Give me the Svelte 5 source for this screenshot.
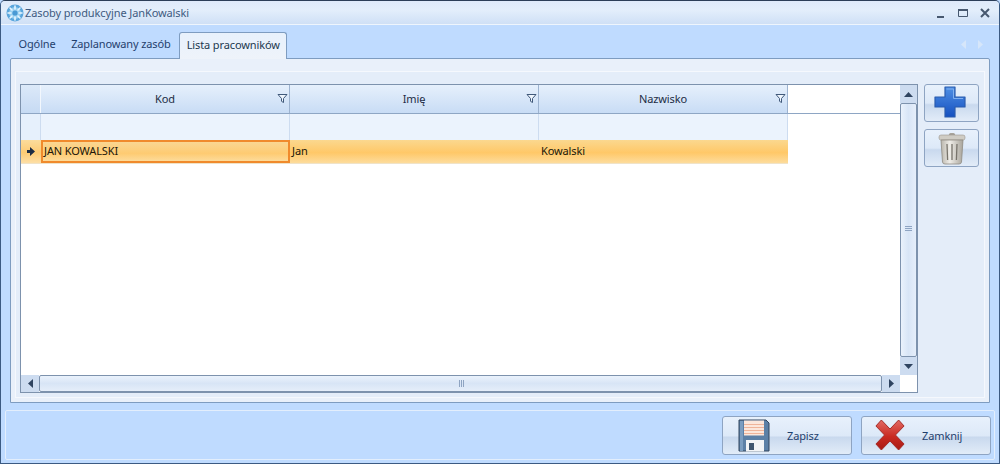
<script>
  const columns = [
    { title: "Kod", value: "JAN KOWALSKI" },
    { title: "Imię", value: "Jan" },
    { title: "Nazwisko", value: "Kowalski" }
  ];
</script>

<div class="window">
  <header class="titlebar">
    <svg class="app-icon" width="18" height="18" viewBox="0 0 18 18">
      <circle cx="9" cy="9" r="8.5" fill="#5aa6dc" />
      <circle cx="9" cy="9" r="6" fill="#9ad0f0" />
      <g stroke="#e6f5ff" stroke-width="1.6" stroke-linecap="round">
        <path d="M9 2v3M9 13v3M2 9h3M13 9h3M4 4l2 2M12 12l2 2M14 4l-2 2M6 12l-2 2" />
      </g>
      <circle cx="9" cy="9" r="2.6" fill="#4a9ad4" />
    </svg>
    <span class="title">Zasoby produkcyjne JanKowalski</span>
    <div class="window-controls">
      <svg width="12" height="12" viewBox="0 0 12 12"><path d="M2 9h7v2H2z" fill="#47586f" /></svg>
      <svg width="12" height="12" viewBox="0 0 12 12"><path d="M1.500 2.500h9v7h-9z" fill="none" stroke="#47586f" /><path d="M1 2h10v2H1z" fill="#47586f" /></svg>
      <svg width="12" height="12" viewBox="0 0 12 12"><path d="M2 2l8 8M10 2l-8 8" stroke="#47586f" stroke-width="2" /></svg>
    </div>
  </header>

  <nav class="tabs">
    <span class="tab">Ogólne</span>
    <span class="tab">Zaplanowany zasób</span>
    <span class="tab active">Lista pracowników</span>
    <div class="tab-arrows">
      <svg width="5" height="9" viewBox="0 0 5 9"><path d="M5 0v9L0 4.500z" fill="#d6e6fa" /></svg>
      <svg width="5" height="9" viewBox="0 0 5 9"><path d="M0 0v9l5-4.500z" fill="#d6e6fa" /></svg>
    </div>
  </nav>

  <section class="page">
    <div class="panel">
      <div class="grid-box">
        <div class="grid-main">
          <div class="grid-content">
            <div class="row head">
              <div class="corner"></div>
              {#each columns as col}
                <div class="head-cell">
                  <span class="head-title">{col.title}</span>
                  <svg class="filter" width="11" height="11" viewBox="0 0 11 11">
                    <path d="M1 1.500h9L6.500 5.500v4l-2-1.200V5.500z" fill="#eef5fd" stroke="#40597a" />
                  </svg>
                </div>
              {/each}
            </div>
            <div class="row filter-row">
              <div class="indicator"></div>
              {#each columns as col}
                <div class="filter-cell"></div>
              {/each}
            </div>
            <div class="row data">
              <div class="indicator selected">
                <svg width="8" height="9" viewBox="0 0 8 9"><path d="M3 0l5 4.500-5 4.500V6H0V3h3z" fill="#1c2c44" /></svg>
              </div>
              {#each columns as col, i}
                <div class="data-cell" class:current={i === 0}>{col.value}</div>
              {/each}
            </div>
          </div>
          <div class="vscroll">
            <div class="sb-btn vbtn"><svg width="9" height="5" viewBox="0 0 9 5"><path d="M4.500 0L9 5H0z" fill="#2f4460" /></svg></div>
            <div class="vthumb">
              <svg width="7" height="5" viewBox="0 0 7 5"><path d="M0 .5h7M0 2.500h7M0 4.500h7" stroke="#8ea4c2" /></svg>
            </div>
            <div class="sb-btn vbtn"><svg width="9" height="5" viewBox="0 0 9 5"><path d="M4.500 5L9 0H0z" fill="#2f4460" /></svg></div>
          </div>
        </div>
        <div class="hscroll">
          <div class="sb-btn hbtn"><svg width="5" height="9" viewBox="0 0 5 9"><path d="M5 0v9L0 4.500z" fill="#2f4460" /></svg></div>
          <div class="hthumb">
            <svg width="5" height="7" viewBox="0 0 5 7"><path d="M.5 0v7M2.500 0v7M4.500 0v7" stroke="#8ea4c2" /></svg>
          </div>
          <div class="sb-btn hbtn"><svg width="5" height="9" viewBox="0 0 5 9"><path d="M0 0v9l5-4.500z" fill="#2f4460" /></svg></div>
          <div class="sb-corner"></div>
        </div>
      </div>

      <div class="side-buttons">
        <button class="btn side">
          <svg class="plus" width="32" height="32" viewBox="0 0 32 32">
            <defs>
              <linearGradient id="plus" x1="0" y1="0" x2="0" y2="1">
                <stop offset="0" stop-color="#4f8fe4" />
                <stop offset="1" stop-color="#1550c0" />
              </linearGradient>
            </defs>
            <path d="M11 1h10v10h10v10H21v10H11V21H1V11h10z" fill="url(#plus)" stroke="#2a5cae" stroke-linejoin="round" stroke-width="1.200" />
            <path d="M12.500 3h7v9.500H29" fill="none" stroke="#7fb0f0" />
          </svg>
        </button>
        <button class="btn side">
          <svg class="trash" width="28" height="33" viewBox="0 0 28 33">
            <defs>
              <linearGradient id="can" x1="0" y1="0" x2="1" y2="0">
                <stop offset="0" stop-color="#b9b5ac" />
                <stop offset="0.4" stop-color="#efede8" />
                <stop offset="1" stop-color="#a8a49b" />
              </linearGradient>
            </defs>
            <rect x="11" y="1" width="6" height="3" rx="1.500" fill="#a7a39a" />
            <rect x="1" y="3" width="26" height="5" rx="2" fill="#cfccc4" stroke="#9a968d" stroke-width=".6" />
            <path d="M3 8h22l-1.500 22q-.2 2-2.500 2H7q-2.300 0-2.500-2z" fill="url(#can)" stroke="#8f8b83" stroke-width=".8" />
            <path d="M9 12l.6 16M14 12v16M19 12l-.6 16" stroke="#77736b" stroke-width="1.300" fill="none" />
          </svg>
        </button>
      </div>
    </div>
  </section>

  <footer class="footer">
    <button class="btn action save">
      <svg width="32" height="33" viewBox="0 0 32 33">
        <path d="M1 1h27l3 3v28H1z" fill="#5c80a6" stroke="#33465e" />
        <path d="M6 1.500h20v15H6z" fill="#fbe7dc" />
        <path d="M6 5.500h20M6 8.500h20M6 11.500h20M6 14.500h20" stroke="#efb49a" />
        <path d="M8 21h18v11.500H8z" fill="#f2f4f6" />
        <path d="M11 24h5v7h-5z" fill="#40566f" />
        <path d="M2 2h3v30H2z" fill="#7b9dc0" />
      </svg>
      <span>Zapisz</span>
    </button>
    <button class="btn action close">
      <svg width="30" height="32" viewBox="0 0 33 32" preserveAspectRatio="none">
        <defs>
          <linearGradient id="cross" x1="0" y1="0" x2="0" y2="1">
            <stop offset="0" stop-color="#e26a64" />
            <stop offset="0.55" stop-color="#c92a22" />
            <stop offset="1" stop-color="#a81a14" />
          </linearGradient>
        </defs>
        <path d="M7 1l9.500 9L26 1l6 6-9.500 9 9.500 9-6 6-9.500-9L7 31l-6-6 9.500-9L1 7z" fill="url(#cross)" stroke="#a12a26" stroke-linejoin="round" />
      </svg>
      <span>Zamknij</span>
    </button>
  </footer>
</div>

<style>
  :global(body) {
    background: #bfdbff;
  }

  .window {
    width: 1000px;
    height: 464px;
    box-sizing: border-box;
    display: flex;
    flex-direction: column;
    background: #bfdbff;
    border: 1px solid #3b5a82;
    border-top-color: #2c3e58;
    border-radius: 5px 5px 0 0;
    font-family: "Noto Sans", "Liberation Sans", sans-serif;
    font-size: 11px;
    letter-spacing: -0.12px;
    color: #1e395b;
    overflow: hidden;
  }

  .titlebar {
    height: 23px;
    flex: none;
    display: flex;
    align-items: center;
    padding: 0 8px 0 5px;
    gap: 1px;
    background: linear-gradient(#dfeafa, #e3eefb 40%, #cfe0f6);
    border-bottom: 1px solid #eef5fd;
  }

  .title {
    color: #3e5a80;
    letter-spacing: -0.1px;
  }

  .window-controls {
    margin-left: auto;
    display: flex;
    gap: 10px;
  }

  .tabs {
    height: 27px;
    margin-top: 6px;
    flex: none;
    display: flex;
    align-items: flex-end;
    padding-left: 10px;
  }

  .tab {
    height: 26px;
    line-height: 24px;
    padding: 0 8px 0 7.500px;
    color: #1f3f6d;
    box-sizing: border-box;
  }

  .tab.active {
    height: 27px;
    padding: 0 6px 0 7px;
    color: #22384f;
    background: linear-gradient(#e8f1fc, #eef3fa);
    border: 1px solid #7e9cc0;
    border-bottom: 0;
    border-radius: 3px 3px 0 0;
    position: relative;
    top: 1px;
    z-index: 1;
  }

  .tab-arrows {
    margin-left: auto;
    align-self: center;
    display: flex;
    gap: 12px;
    padding-right: 16px;
  }

  .page {
    flex: 1;
    margin: 0 9px;
    display: flex;
    background: #e9f0fa;
    border: 1px solid #7e9cc0;
    border-radius: 2px 2px 0 0;
    padding: 12px 4px 4px;
    min-height: 0;
  }

  .panel {
    flex: 1;
    display: flex;
    gap: 6px;
    padding: 12px 5px 5px 4px;
    background: #e4edf9;
    border: 1px solid #f5f8fd;
  }

  .grid-box {
    width: 898px;
    height: 309px;
    display: flex;
    flex-direction: column;
    background: #fff;
    border: 1px solid #7d92ad;
    box-sizing: border-box;
  }

  .grid-main {
    flex: 1;
    display: flex;
    min-height: 0;
  }

  .grid-content {
    flex: 1;
  }

  .row {
    display: flex;
  }

  .head {
    height: 28px;
    border-bottom: 1px solid #8ea6c4;
  }

  .corner {
    width: 19px;
    background: linear-gradient(#dce9f9, #c6daf3);
    border-right: 1px solid #f2f7fd;
  }

  .head-cell {
    width: 248px;
    box-sizing: content-box;
    position: relative;
    display: flex;
    align-items: center;
    justify-content: center;
    background: linear-gradient(#e6f0fc, #c8dcf5);
    border-right: 1px solid #9db3d0;
    color: #1d2d44;
  }

  .head-title {
    position: relative;
    top: -1px;
  }

  .filter {
    position: absolute;
    right: 1px;
    top: 8px;
  }

  .filter-row {
    height: 26px;
  }

  .indicator {
    width: 19px;
    background: #e6f0fc;
    border-right: 1px solid #cddcf0;
    display: flex;
    align-items: center;
    justify-content: center;
  }

  .filter-cell {
    width: 248px;
    background: #ebf3fd;
    border-right: 1px solid #cddcf0;
  }

  .data {
    height: 23px;
    background: linear-gradient(#fbd88f, #ffc868 55%, #fddc9c);
    border-bottom: 1px solid #f0e3c8;
    width: max-content;
  }

  .indicator.selected {
    background: linear-gradient(#fbdc9c, #fdcb74 55%, #fddfa6);
    border-right: 0;
    width: 20px;
  }

  .data-cell {
    width: 247px;
    padding-left: 2px;
    line-height: 21px;
    color: #20170a;
  }

  .data-cell.current {
    width: 244px;
    padding-left: 1px;
    line-height: 17px;
    border: 2px solid #f08a2c;
    background: linear-gradient(#fad692, #fecb72 60%, #fddb9a);
  }

  .vscroll {
    width: 17px;
    flex: none;
    display: flex;
    flex-direction: column;
    background: #e3edf9;
  }

  .sb-btn {
    display: flex;
    align-items: center;
    justify-content: center;
    background: #cddcf0;
    flex: none;
  }

  .vbtn {
    height: 18px;
  }

  .vthumb {
    flex: 1;
    display: flex;
    align-items: center;
    justify-content: center;
    padding-bottom: 4px;
    background: linear-gradient(90deg, #eaf2fc, #d8e5f6 50%, #e5eefa);
    border: 1px solid #7d92ad;
    border-radius: 2px;
  }

  .hscroll {
    height: 17px;
    flex: none;
    display: flex;
  }

  .hbtn {
    width: 18px;
  }

  .hthumb {
    flex: 1;
    display: flex;
    align-items: center;
    justify-content: center;
    padding-left: 2px;
    background: linear-gradient(#eaf2fc, #d8e5f6 50%, #e5eefa);
    border: 1px solid #7d92ad;
    border-radius: 2px;
  }

  .sb-corner {
    width: 17px;
    background: #fff;
    flex: none;
  }

  .side-buttons {
    display: flex;
    flex-direction: column;
    gap: 7px;
  }

  .btn {
    display: flex;
    align-items: center;
    box-sizing: border-box;
    padding: 0;
    margin: 0;
    font: inherit;
    letter-spacing: inherit;
    color: #1f3f6d;
    border: 1px solid #8ea4c2;
    border-radius: 3px;
    background: linear-gradient(#e8f1fc, #dde9f8 50%, #c9d9ee 55%, #e2ecf8);
  }

  .side {
    width: 55px;
    height: 38px;
    justify-content: center;
    overflow: hidden;
  }

  .plus {
    margin: -2px 3px 0 0;
  }

  .footer {
    height: 48px;
    flex: none;
    margin: 7px 4px 3px;
    display: flex;
    justify-content: flex-end;
    align-items: center;
    gap: 9px;
    padding-right: 3px;
    background: #bfdbff;
    border: 1px solid #e3eefc;
    border-radius: 2px;
  }

  .action {
    width: 130px;
    height: 39px;
    gap: 17px;
  }

  .save {
    padding-left: 15px;
  }

  .close {
    padding-left: 13px;
  }
</style>
